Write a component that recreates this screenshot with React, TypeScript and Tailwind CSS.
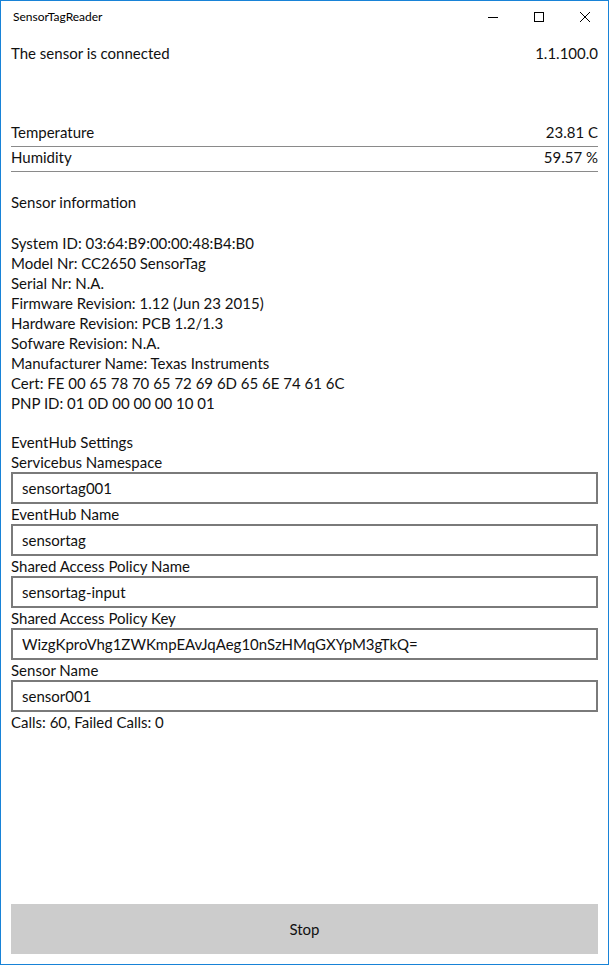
import React from "react";

const font = "font-['Lato','Liberation_Sans',Arial,sans-serif]";

const fields = [
	{ label: "Servicebus Namespace", value: "sensortag001" },
	{ label: "EventHub Name", value: "sensortag" },
	{ label: "Shared Access Policy Name", value: "sensortag-input" },
	{ label: "Shared Access Policy Key", value: "WizgKproVhg1ZWKmpEAvJqAeg10nSzHMqGXYpM3gTkQ=" },
	{ label: "Sensor Name", value: "sensor001" },
];

const info = [
	"System ID: 03:64:B9:00:00:48:B4:B0",
	"Model Nr: CC2650 SensorTag",
	"Serial Nr: N.A.",
	"Firmware Revision: 1.12 (Jun 23 2015)",
	"Hardware Revision: PCB 1.2/1.3",
	"Sofware Revision: N.A.",
	"Manufacturer Name: Texas Instruments",
	"Cert: FE 00 65 78 70 65 72 69 6D 65 6E 74 61 6C",
	"PNP ID: 01 0D 00 00 00 10 01",
];

const TitleBar = () => (
	<div className="flex h-[31px] items-center">
		<span className="ml-[12px] flex-1 text-[12px] text-black">SensorTagReader</span>
		<button className="flex h-full w-[46px] items-center justify-center">
			<svg width="10" height="10" viewBox="0 0 10 10">
				<path d="M0 5.5h10" stroke="#000" strokeWidth="1" />
			</svg>
		</button>
		<button className="flex h-full w-[46px] items-center justify-center">
			<svg width="10" height="10" viewBox="0 0 10 10">
				<rect x="0.5" y="0.5" width="9" height="9" fill="none" stroke="#000" strokeWidth="1" />
			</svg>
		</button>
		<button className="flex h-full w-[46px] items-center justify-center">
			<svg width="10" height="10" viewBox="0 0 10 10">
				<path d="M0 0L10 10M10 0L0 10" stroke="#000" strokeWidth="1" />
			</svg>
		</button>
	</div>
);

const Reading = ({ label, value }: { label: string; value: string }) => (
	<div className="flex justify-between border-b border-[#8a8a8a] pb-[4px]">
		<span>{label}</span>
		<span>{value}</span>
	</div>
);

export default function App() {
	return (
		<div
			className={`flex h-[965px] w-[609px] flex-col border border-[#1883d7] bg-white text-[15px] leading-[20px] text-[#111] ${font}`}
		>
			<TitleBar />
			<div className="flex flex-1 flex-col px-[10px] pt-[11px] pb-[10px]">
				<div className="flex justify-between">
					<span>The sensor is connected</span>
					<span>1.1.100.0</span>
				</div>

				<div className="mt-[59px]">
					<Reading label="Temperature" value="23.81 C" />
					<Reading label="Humidity" value="59.57 %" />
				</div>

				<div className="mt-[20px]">Sensor information</div>
				<div className="mt-[21px]">
					{info.map((line) => (
						<div key={line}>{line}</div>
					))}
				</div>

				<div className="mt-[19px]">EventHub Settings</div>
				{fields.map((f) => (
					<div key={f.label}>
						<label className="block">{f.label}</label>
						<input
							className="block h-[32px] w-full border-2 border-[#7a7a7a] px-[9px] text-[#111] outline-none"
							type="text"
							value={f.value}
							readOnly
						/>
					</div>
				))}
				<div>Calls: 60, Failed Calls: 0</div>

				<div className="flex-1" />
				<button className="h-[50px] w-full bg-[#cccccc] text-[#111]">Stop</button>
			</div>
		</div>
	);
}
